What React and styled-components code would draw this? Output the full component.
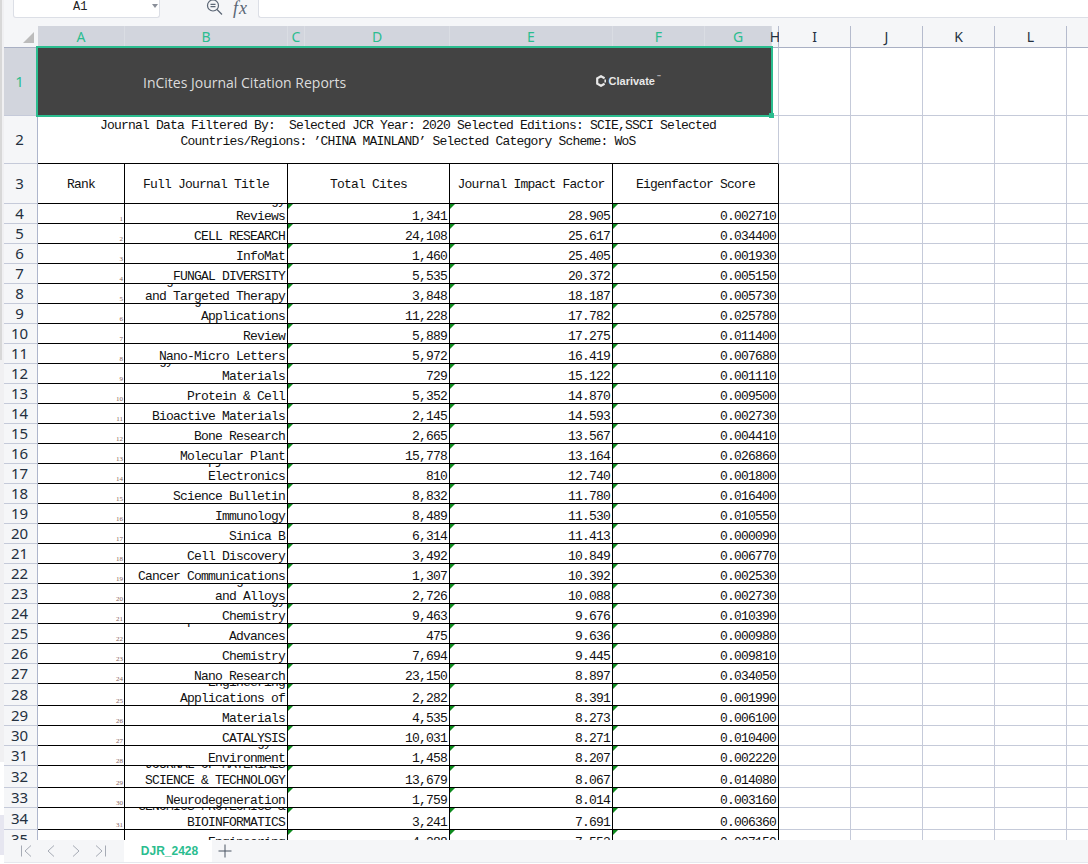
import React from "react";
import styled, { createGlobalStyle } from "styled-components";

const COLUMNS = "34px 87px 163px 17px 145px 163px 92px 67px 7px 72px 72px 72px 72px 1fr";
const GREEN = "#2bbd8f";
const GRID_LINE = "#c5cad9";
const SHEET_FONT = '"Liberation Mono", monospace';
const UI_FONT = '"Noto Sans", sans-serif';

const GlobalStyle = createGlobalStyle`
  html, body {
    margin: 0;
    height: 100%;
    overflow: hidden;
    background: #fff;
  }
`;

const Window = styled.div`
  display: flex;
  width: 1088px;
  height: 864px;
  overflow: hidden;
`;

const LeftStrip = styled.div`
  width: 4px;
  flex: none;
  background:
    linear-gradient(90deg, #d8d8d8 2px, transparent 2px) 0 0 / 100% 360px no-repeat,
    linear-gradient(#f0f0f2, #f0f0f2) 0 0 / 100% 762px no-repeat,
    linear-gradient(#e6e6f0, #e6e6f0) 0 815px / 100% 40px no-repeat,
    #fff;
`;

const Main = styled.div`
  flex: 1;
  min-width: 0;
  display: flex;
  flex-direction: column;
`;

const FormulaBar = styled.div`
  height: 26px;
  flex: none;
  display: flex;
  align-items: flex-start;
  background: #f5f6f8;
`;

const NameBox = styled.div`
  width: 147px;
  height: 18px;
  margin-left: 9px;
  flex: none;
  position: relative;
  box-sizing: border-box;
  background: #fff;
  border: 1px solid #dcdfe6;
  border-top: none;
  border-radius: 0 0 3px 3px;
  font: 12px/12px ${SHEET_FONT};
  color: #222;
  padding: 1px 0 0 59px;

  &::after {
    content: "";
    position: absolute;
    right: 1px;
    top: 4px;
    border: 3px solid transparent;
    border-top: 4px solid #8a8f99;
  }
`;

const BarIcons = styled.div`
  display: flex;
  align-items: flex-start;
  gap: 10px;
  width: 98px;
  flex: none;
  padding-left: 46px;
  box-sizing: border-box;
`;

const Fx = styled.span`
  font: italic 18px/16px "Liberation Serif", serif;
  color: #5b6675;
  letter-spacing: 1px;
`;

const FormulaInput = styled.div`
  flex: 1;
  height: 18px;
  box-sizing: border-box;
  background: #fff;
  border: 1px solid #dcdfe6;
  border-top: none;
  border-right: none;
  border-radius: 0 0 0 3px;
`;

const Sheet = styled.div`
  flex: none;
  height: 814px;
  overflow: hidden;
`;

const Row = styled.div`
  display: grid;
  grid-template-columns: ${COLUMNS};
  height: ${(p) => p.$height}px;
  font: 13px/16px ${SHEET_FONT};
  letter-spacing: -0.8px;
  color: #111;
`;

const Corner = styled.div`
  background: #f5f6f8;
  border-bottom: 1px solid #a9b0c4;
  position: relative;

  &::after {
    content: "";
    position: absolute;
    right: 4px;
    bottom: 4px;
    width: 11px;
    height: 11px;
    background: #bcbcbc;
    clip-path: polygon(100% 0, 100% 100%, 0 100%);
  }
`;

const ColHead = styled.div`
  display: flex;
  align-items: center;
  justify-content: center;
  padding-top: 1px;
  box-sizing: border-box;
  font: 14px/16px ${UI_FONT};
  letter-spacing: 0;
  color: ${(p) => (p.$active ? GREEN : "#24303f")};
  background: ${(p) => (p.$active ? "#d2d5dd" : "#f5f6f8")};
  border-bottom: 1px solid #a9b0c4;
  border-right: 1px solid ${(p) => (p.$active ? "#dadde3" : "#b5bbcd")};

  &:last-child {
    border-right: none;
  }
`;

const RowHead = styled.div`
  display: flex;
  align-items: center;
  justify-content: center;
  box-sizing: border-box;
  padding: 0 2px 2px 0;
  font: 15px/16px ${UI_FONT};
  letter-spacing: 0;
  color: ${(p) => (p.$active ? GREEN : "#24303f")};
  background: ${(p) => (p.$active ? "#d2d5dd" : "#f5f6f8")};
  border-right: 1px solid #aeb6cc;
  border-bottom: 1px solid ${GRID_LINE};
`;

const Blank = styled.div`
  border-right: 1px solid ${GRID_LINE};
  border-bottom: 1px solid ${GRID_LINE};

  &:last-child {
    border-right: none;
  }
`;

const Banner = styled.div`
  grid-column: span 7;
  position: relative;
  display: flex;
  align-items: center;
  padding-left: 105px;
  box-sizing: border-box;
  background: #434343;
  font: 14px/18px "Open Sans", sans-serif;
  letter-spacing: 0;
  color: #dcdcdc;
`;

const BannerTitle = styled.span`
  margin-top: 2px;
`;

const Selection = styled.div`
  position: absolute;
  inset: -2px -1px -1px -2px;
  border: 2px solid ${GREEN};
  pointer-events: none;
`;

const FillHandle = styled.div`
  position: absolute;
  right: -3px;
  bottom: -3px;
  width: 5px;
  height: 5px;
  background: ${GREEN};
`;

const Logo = styled.div`
  margin: 0 111px 3px auto;
  display: flex;
  align-items: center;
  gap: 2px;
  font: bold 11px/12px "Liberation Sans", sans-serif;
  color: #e8e8e8;

  sup {
    font-size: 4px;
    line-height: 4px;
    align-self: flex-start;
  }
`;

const Note = styled.div`
  grid-column: span 8;
  padding-top: 2px;
  text-align: center;
  border-right: 1px solid ${GRID_LINE};
  border-bottom: 1px solid #000;
`;

const HeadCell = styled.div`
  grid-column: span ${(p) => p.$span || 1};
  display: flex;
  align-items: center;
  justify-content: center;
  padding-top: 3px;
  box-sizing: border-box;
  border-right: 1px solid #000;
  border-bottom: 1px solid #000;
`;

const RankCell = styled.div`
  display: flex;
  align-items: flex-end;
  justify-content: flex-end;
  padding: 0 1px 0 0;
  box-sizing: border-box;
  font: 7px/8px "Liberation Serif", serif;
  letter-spacing: 0;
  color: #86645c;
  border-right: 1px solid #000;
  border-bottom: 1px solid #000;
`;

const TitleCell = styled.div`
  display: flex;
  flex-direction: column;
  justify-content: flex-end;
  overflow: hidden;
  padding: 0 2px 0 3px;
  box-sizing: border-box;
  text-align: right;
  border-right: 1px solid #000;
  border-bottom: 1px solid #000;
`;

const TitleText = styled.div`
  margin-bottom: -2px;
`;

const ValueCell = styled.div`
  grid-column: span ${(p) => p.$span || 1};
  position: relative;
  display: flex;
  align-items: flex-end;
  justify-content: flex-end;
  overflow: hidden;
  padding-right: 2px;
  box-sizing: border-box;
  border-right: 1px solid #000;
  border-bottom: 1px solid #000;

  &::before {
    content: "";
    position: absolute;
    left: 0;
    top: 0;
    width: 5px;
    height: 5px;
    background: #0d8a1d;
    clip-path: polygon(0 0, 100% 0, 0 100%);
  }
`;

const ValueText = styled.span`
  margin-bottom: -2px;
`;

const TabBar = styled.div`
  height: 22px;
  flex: none;
  display: flex;
  background: #f5f6f8;
  border-bottom: 1px solid #e6e8ee;
`;

const TabNav = styled.div`
  width: 120px;
  flex: none;
  display: flex;
  align-items: center;
  gap: 11px;
  padding-left: 15px;
  box-sizing: border-box;
  color: #a6abb5;
`;

const Tab = styled.div`
  width: 88px;
  flex: none;
  display: flex;
  align-items: center;
  justify-content: center;
  background: #fff;
  padding-left: 3px;
  box-sizing: border-box;
  font: bold 12px/16px "Liberation Sans", sans-serif;
  color: ${GREEN};
`;

const AddTab = styled.div`
  display: flex;
  align-items: center;
  padding-left: 6px;
  color: #4b5563;
`;

const NavIcon = ({ d }) => (
  <svg width="14" height="14" viewBox="0 0 14 14" fill="none" stroke="currentColor" strokeWidth="1">
    <path d={d} />
  </svg>
);

const COLUMN_HEADS = [
  ["A", 1], ["B", 1], ["C", 1], ["D", 1], ["E", 1], ["F", 1], ["G", 1],
  ["H", 0], ["I", 0], ["J", 0], ["K", 0], ["L", 0], ["", 0],
];

const JOURNALS = [
  ["Electrochemical Energy Reviews", "1,341", "28.905", "0.002710"],
  ["CELL RESEARCH", "24,108", "25.617", "0.034400"],
  ["InfoMat", "1,460", "25.405", "0.001930"],
  ["FUNGAL DIVERSITY", "5,535", "20.372", "0.005150"],
  ["Signal Transduction and Targeted Therapy", "3,848", "18.187", "0.005730"],
  ["Light-Science & Applications", "11,228", "17.782", "0.025780"],
  ["National Science Review", "5,889", "17.275", "0.011400"],
  ["Nano-Micro Letters", "5,972", "16.419", "0.007680"],
  ["Energy & Environmental Materials", "729", "15.122", "0.001110"],
  ["Protein & Cell", "5,352", "14.870", "0.009500"],
  ["Bioactive Materials", "2,145", "14.593", "0.002730"],
  ["Bone Research", "2,665", "13.567", "0.004410"],
  ["Molecular Plant", "15,778", "13.164", "0.026860"],
  ["npj Flexible Electronics", "810", "12.740", "0.001800"],
  ["Science Bulletin", "8,832", "11.780", "0.016400"],
  ["Cellular & Molecular Immunology", "8,489", "11.530", "0.010550"],
  ["Acta Pharmaceutica Sinica B", "6,314", "11.413", "0.000090"],
  ["Cell Discovery", "3,492", "10.849", "0.006770"],
  ["Cancer Communications", "1,307", "10.392", "0.002530"],
  ["Journal of Magnesium and Alloys", "2,726", "10.088", "0.002730"],
  ["Journal of Energy Chemistry", "9,463", "9.676", "0.010390"],
  ["Opto-Electronic Advances", "475", "9.636", "0.000980"],
  ["Science China Chemistry", "7,694", "9.445", "0.009810"],
  ["Nano Research", "23,150", "8.897", "0.034050"],
  ["Engineering Applications of", "2,282", "8.391", "0.001990", 22],
  ["Science China Materials", "4,535", "8.273", "0.006100"],
  ["Chinese Journal of CATALYSIS", "10,031", "8.271", "0.010400"],
  ["Green Energy & Environment", "1,458", "8.207", "0.002220"],
  ["JOURNAL OF MATERIALS SCIENCE & TECHNOLOGY", "13,679", "8.067", "0.014080", 22],
  ["Translational Neurodegeneration", "1,759", "8.014", "0.003160"],
  ["GENOMICS PROTEOMICS & BIOINFORMATICS", "3,241", "7.691", "0.006360", 22],
  ["Engineering", "4,288", "7.553", "0.007150"],
];

const GridRest = () => (
  <>
    <Blank />
    <Blank />
    <Blank />
    <Blank />
    <Blank />
  </>
);

export default function App() {
  return (
    <Window>
      <GlobalStyle />
      <LeftStrip />
      <Main>
        <FormulaBar>
          <NameBox>A1</NameBox>
          <BarIcons>
            <svg width="17" height="15" viewBox="0 0 17 15" fill="none" stroke="#5b6675" strokeWidth="1.2">
              <circle cx="7" cy="5.500" r="5.500" />
              <path d="M4.500 4.300h5M4.500 6.700h5M11 9.500l5 5" />
            </svg>
            <Fx>fx</Fx>
          </BarIcons>
          <FormulaInput />
        </FormulaBar>

        <Sheet>
          <Row $height={22}>
            <Corner />
            {COLUMN_HEADS.map(([label, active], i) => (
              <ColHead key={i} $active={!!active}>{label}</ColHead>
            ))}
          </Row>

          <Row $height={68}>
            <RowHead $active>1</RowHead>
            <Banner>
              <BannerTitle>InCites Journal Citation Reports</BannerTitle>
              <Logo>
                <svg width="12" height="12" viewBox="0 0 12 12" fill="none" stroke="#e8e8e8" strokeWidth="2.2">
                  <path d="M9.600 3.200 6 1.200 2.200 3.400v5.200L6 10.800l3.600-2" />
                  <path d="M10.200 4.600v2.800" strokeWidth="1.600" />
                </svg>
                <span>Clarivate</span>
                <sup>™</sup>
              </Logo>
              <Selection>
                <FillHandle />
              </Selection>
            </Banner>
            <Blank />
            <GridRest />
          </Row>

          <Row $height={48}>
            <RowHead>2</RowHead>
            <Note>
              Journal Data Filtered By:&nbsp; Selected JCR Year: 2020 Selected Editions: SCIE,SSCI Selected
              <br />
              Countries/Regions: ’CHINA MAINLAND’ Selected Category Scheme: WoS
            </Note>
            <GridRest />
          </Row>

          <Row $height={40}>
            <RowHead>3</RowHead>
            <HeadCell>Rank</HeadCell>
            <HeadCell>Full Journal Title</HeadCell>
            <HeadCell $span={2}>Total Cites</HeadCell>
            <HeadCell>Journal Impact Factor</HeadCell>
            <HeadCell $span={3}>Eigenfactor Score</HeadCell>
            <GridRest />
          </Row>

          {JOURNALS.map(([title, cites, impact, eigen, height], i) => (
            <Row key={title} $height={height || 20}>
              <RowHead>{i + 4}</RowHead>
              <RankCell>{i + 1}</RankCell>
              <TitleCell>
                <TitleText>{title}</TitleText>
              </TitleCell>
              <ValueCell $span={2}>
                <ValueText>{cites}</ValueText>
              </ValueCell>
              <ValueCell>
                <ValueText>{impact}</ValueText>
              </ValueCell>
              <ValueCell $span={3}>
                <ValueText>{eigen}</ValueText>
              </ValueCell>
              <GridRest />
            </Row>
          ))}
        </Sheet>

        <TabBar>
          <TabNav>
            <NavIcon d="M2.500 1.500v11M12 1.500 6 7l6 5.500" />
            <NavIcon d="M10 1.500 4 7l6 5.500" />
            <NavIcon d="M4 1.500 10 7l-6 5.500" />
            <NavIcon d="M11.500 1.500v11M2 1.500 8 7l-6 5.500" />
          </TabNav>
          <Tab>DJR_2428</Tab>
          <AddTab>
            <NavIcon d="M7 .5v13M.5 7h13" />
          </AddTab>
        </TabBar>
      </Main>
    </Window>
  );
}
